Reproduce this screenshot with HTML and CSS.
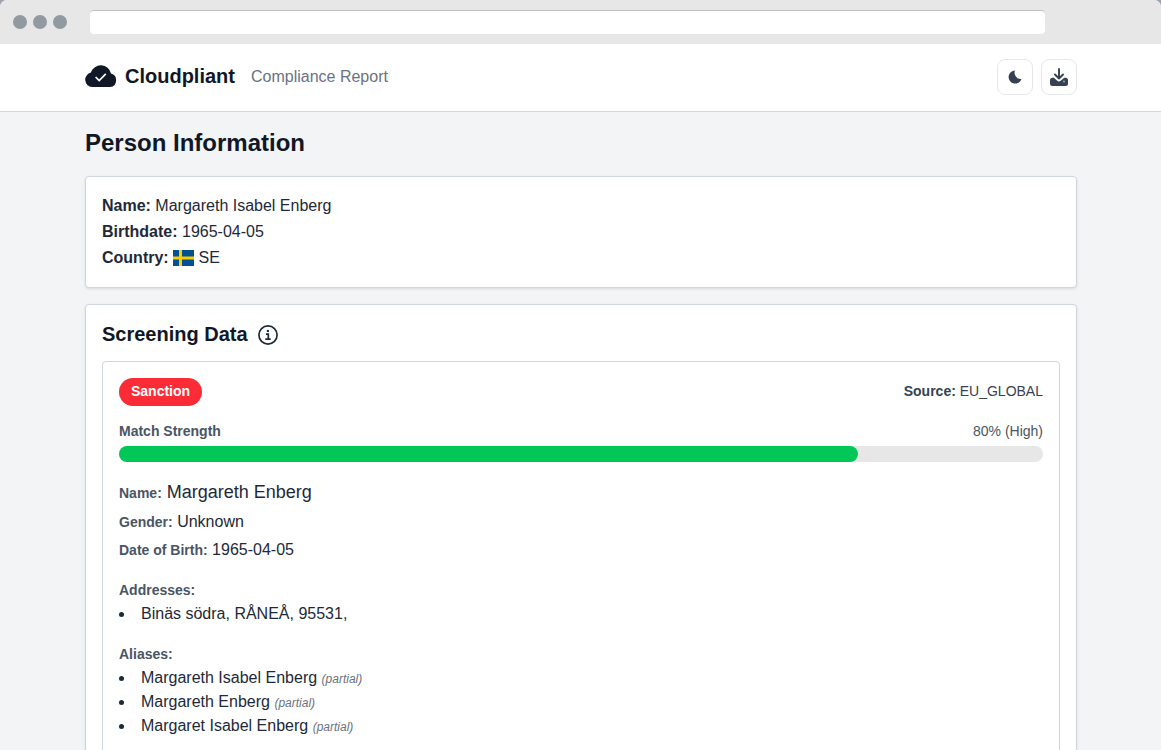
FILE: index.html
```
<!DOCTYPE html>
<html lang="en">
<head>
    <meta charset="UTF-8">
    <meta name="viewport" content="width=device-width, initial-scale=1.0">
    <title>Cloudpliant - Compliance Report</title>
    <link rel="stylesheet" href="styles.css">
</head>
<body>
    <div class="window">
        <div class="toolbar">
            <span class="dot"></span>
            <span class="dot"></span>
            <span class="dot"></span>
            <div class="address-bar"></div>
        </div>

        <header class="header">
            <div class="container header-inner">
                <svg class="logo" viewBox="0 0 32 22">
                    <path fill="#101828" d="M7 22A7.300 7.300 0 0 1 5.900 7.600 10.400 10.400 0 0 1 26 8.600 6.850 6.850 0 0 1 25.200 22z"/>
                    <path fill="none" stroke="#fff" stroke-width="1.700" d="M10.600 12l3.600 3.500 6.600-6.600"/>
                </svg>
                <span class="brand">Cloudpliant</span>
                <span class="subtitle">Compliance Report</span>
                <div class="actions">
                    <button class="icon-button" aria-label="Dark mode">
                        <svg width="14" height="14" viewBox="0 0 14 14">
                            <path fill="#364153" d="M7 .4C5.300 3.800 8.200 9.600 13.500 8.900A6.600 6.600 0 1 1 7 .4z"/>
                        </svg>
                    </button>
                    <button class="icon-button" aria-label="Download">
                        <svg width="18" height="18" viewBox="0 0 18 18">
                            <path fill="#364153" d="M2.500 9.700h1.300l3.200 2.900a3 3 0 0 0 4 0l3.200-2.900h1.300A2.500 2.500 0 0 1 18 12.200v3.300a2.500 2.500 0 0 1-2.500 2.500h-13A2.500 2.500 0 0 1 0 15.500v-3.300a2.500 2.500 0 0 1 2.500-2.500z"/>
                            <circle cx="14" cy="13.500" r="1" fill="#99a1af"/>
                            <path fill="none" stroke="#364153" stroke-width="1.900" stroke-linecap="round" stroke-linejoin="round" d="M9 1v9.500M5 6.500l4 4 4-4"/>
                        </svg>
                    </button>
                </div>
            </div>
        </header>

        <main class="container">
            <h1>Person Information</h1>

            <section class="card person">
                <p><strong>Name:</strong> Margareth Isabel Enberg</p>
                <p><strong>Birthdate:</strong> 1965-04-05</p>
                <p><strong>Country:</strong>
                    <svg class="flag" viewBox="0 0 21 16">
                        <path fill="#005293" d="M0 0h21v16H0z"/>
                        <path fill="#fecb00" d="M6 0h3v16H6zM0 6.500h21v3H0z"/>
                    </svg>
                    SE</p>
            </section>

            <section class="card screening">
                <div class="section-title">
                    <h2>Screening Data</h2>
                    <svg width="20" height="20" viewBox="0 0 20 20" fill="none" stroke="#1e2939">
                        <circle cx="10" cy="10" r="9.100" stroke-width="1.700"/>
                        <path stroke-width="1.700" d="M8 9.200h2.300v5M7.300 14.200h5.400"/>
                        <circle cx="9.900" cy="5.900" r="1.200" fill="#1e2939" stroke="none"/>
                    </svg>
                </div>

                <div class="record">
                    <div class="row">
                        <span class="badge">Sanction</span>
                        <span class="source"><strong>Source:</strong> EU_GLOBAL</span>
                    </div>
                    <div class="row strength">
                        <strong>Match Strength</strong>
                        <span>80% (High)</span>
                    </div>
                    <div class="progress">
                        <div class="progress-bar" style="width: 80%"></div>
                    </div>

                    <div class="details">
                        <p class="name"><strong>Name:</strong> Margareth Enberg</p>
                        <p><strong>Gender:</strong> Unknown</p>
                        <p><strong>Date of Birth:</strong> 1965-04-05</p>
                    </div>

                    <h3>Addresses:</h3>
                    <ul>
                        <li>Binäs södra, RÅNEÅ, 95531,</li>
                    </ul>

                    <h3>Aliases:</h3>
                    <ul>
                        <li>Margareth Isabel Enberg <em>(partial)</em></li>
                        <li>Margareth Enberg <em>(partial)</em></li>
                        <li>Margaret Isabel Enberg <em>(partial)</em></li>
                    </ul>
                </div>
            </section>
        </main>
    </div>
</body>
</html>
```
FILE: styles.css
```
* {
    box-sizing: border-box;
}

body {
    margin: 0;
    background-color: #9ca3af;
    color: #1e2939;
    font-family: "Liberation Sans", Arial, sans-serif;
    font-size: 16px;
    line-height: 24px;
}

h1, h2, h3, p, ul {
    margin: 0;
}

.window {
    height: 750px;
    overflow: hidden;
    background-color: #f3f4f6;
    border-radius: 7px 7px 0 0;
}

.toolbar {
    display: flex;
    align-items: center;
    gap: 6px;
    height: 44px;
    padding: 0 13px;
    background-color: #e7e7e7;
}

.dot {
    width: 14px;
    height: 14px;
    border-radius: 50%;
    background-color: #9299a0;
}

.address-bar {
    width: 955px;
    height: 24px;
    margin-left: 17px;
    background-color: #fff;
    border-top: 1px solid #bfbfc2;
    border-radius: 4px;
}

.container {
    width: 992px;
    margin-left: 85px;
}

.header {
    background-color: #fff;
    border-bottom: 1px solid #d1d5dc;
}

.header-inner {
    display: flex;
    align-items: center;
    height: 67px;
    padding-bottom: 1px;
}

.logo {
    width: 32px;
    height: 22px;
    margin: 0 8px 2px 0;
}

.brand {
    margin: 0 16px 2px 0;
    color: #101828;
    font-size: 20px;
    font-weight: bold;
}

.subtitle {
    margin-bottom: 1px;
    color: #6a7282;
}

.actions {
    display: flex;
    gap: 8px;
    margin-left: auto;
}

.icon-button {
    display: flex;
    align-items: center;
    justify-content: center;
    width: 36px;
    height: 36px;
    padding: 0;
    background-color: #fff;
    border: 1px solid #e5e7eb;
    border-radius: 8px;
}

h1 {
    padding: 15px 0 17px;
    color: #101828;
    font-size: 24px;
    line-height: 32px;
}

.card {
    margin-bottom: 16px;
    padding: 16px;
    background-color: #fff;
    border: 1px solid #d1d5dc;
    border-radius: 4px;
    box-shadow: 0 1px 3px rgba(0, 0, 0, 0.1);
}

.person p {
    height: 26px;
    line-height: 26px;
}

.flag {
    width: 21px;
    height: 16px;
    vertical-align: -3px;
}

.section-title {
    display: flex;
    align-items: center;
    gap: 10px;
    height: 28px;
    margin: -1px 0 13px;
}

h2 {
    color: #101828;
    font-size: 20px;
    line-height: 28px;
}

.section-title svg {
    margin-top: 1px;
}

.record {
    padding: 16px;
    border: 1px solid #d1d5dc;
    border-radius: 4px;
}

.row {
    display: flex;
    justify-content: space-between;
    font-size: 14px;
    line-height: 20px;
}

.badge {
    height: 28px;
    padding: 3px 12px;
    background-color: #fb2c36;
    border-radius: 14px;
    color: #fff;
    font-weight: bold;
}

.source {
    padding-top: 3px;
    color: #364153;
}

.strength {
    margin: 15px 0 5px;
    color: #4a5565;
}

.progress {
    height: 16px;
    background-color: #e7e7e7;
    border-radius: 8px;
}

.progress-bar {
    height: 16px;
    background-color: #00c758;
    border-radius: 8px;
}

.details {
    display: flex;
    flex-direction: column;
    gap: 4px;
    margin-top: 16px;
}

.details .name {
    margin-bottom: -1px;
    font-size: 18px;
    line-height: 28px;
}

.details strong, h3 {
    color: #4a5565;
    font-size: 14px;
}

h3 {
    margin-top: 16px;
    line-height: 24px;
}

ul {
    padding: 0;
    list-style-position: inside;
}

li {
    height: 24px;
}

em {
    color: #6a7282;
    font-size: 12px;
    line-height: 1;
}
```
